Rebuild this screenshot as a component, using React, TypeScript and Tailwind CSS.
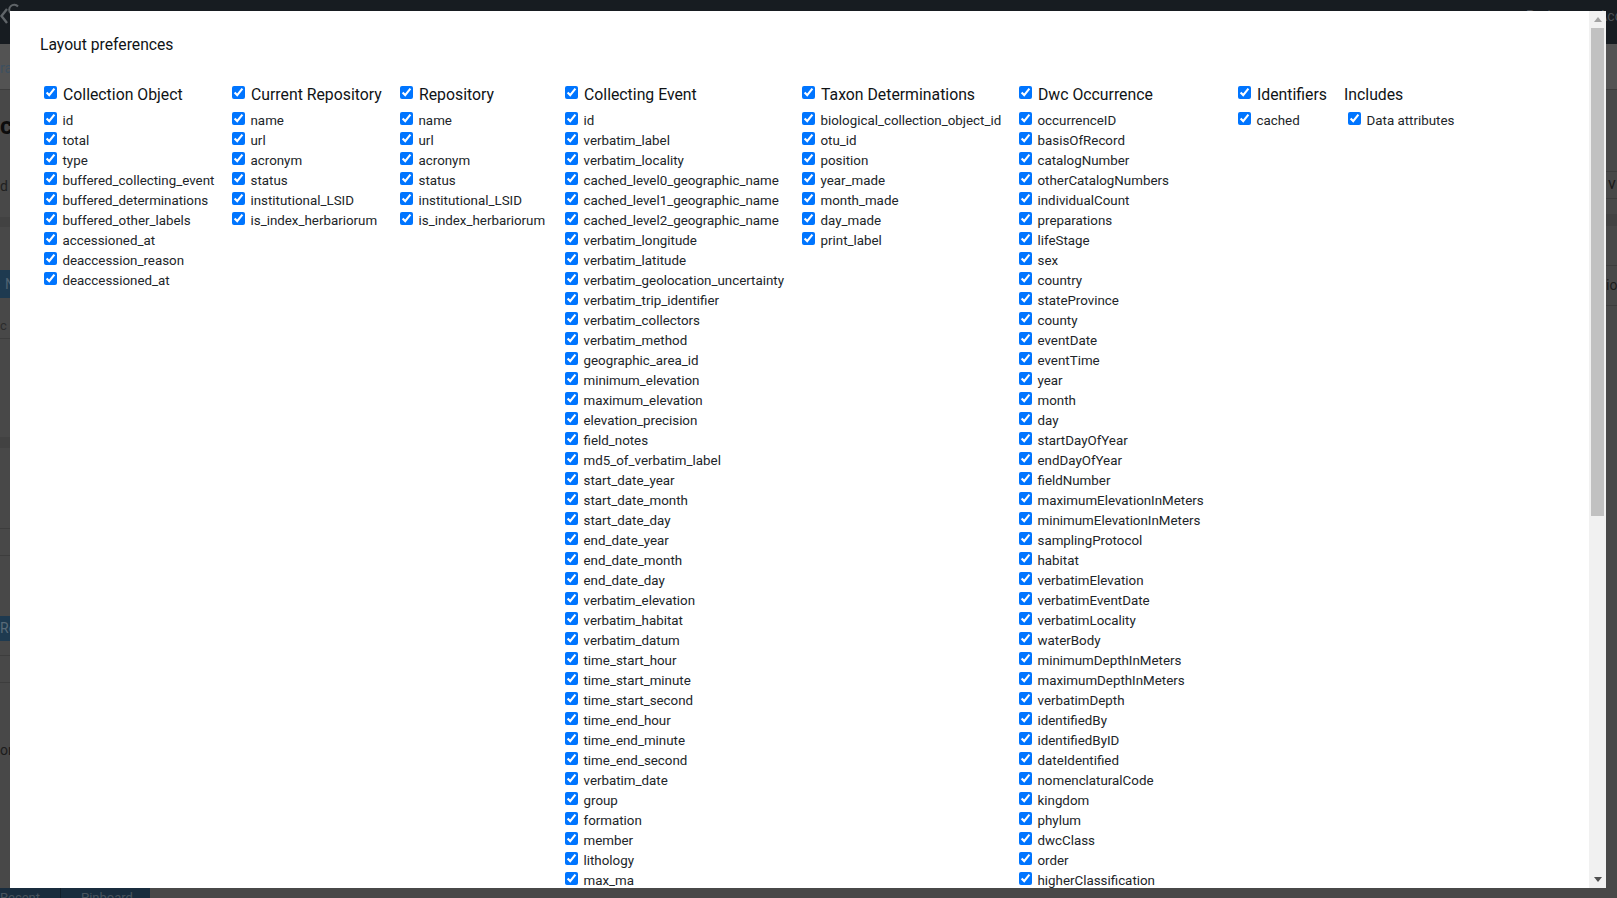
import React from "react";

const columns: { title: string; width: string; check: boolean; items: string[] }[] = [
  { title: "Collection Object", width: "w-[188px]", check: true, items: ["id", "total", "type", "buffered_collecting_event", "buffered_determinations", "buffered_other_labels", "accessioned_at", "deaccession_reason", "deaccessioned_at"] },
  { title: "Current Repository", width: "w-[168px]", check: true, items: ["name", "url", "acronym", "status", "institutional_LSID", "is_index_herbariorum"] },
  { title: "Repository", width: "w-[165px]", check: true, items: ["name", "url", "acronym", "status", "institutional_LSID", "is_index_herbariorum"] },
  { title: "Collecting Event", width: "w-[237px]", check: true, items: ["id", "verbatim_label", "verbatim_locality", "cached_level0_geographic_name", "cached_level1_geographic_name", "cached_level2_geographic_name", "verbatim_longitude", "verbatim_latitude", "verbatim_geolocation_uncertainty", "verbatim_trip_identifier", "verbatim_collectors", "verbatim_method", "geographic_area_id", "minimum_elevation", "maximum_elevation", "elevation_precision", "field_notes", "md5_of_verbatim_label", "start_date_year", "start_date_month", "start_date_day", "end_date_year", "end_date_month", "end_date_day", "verbatim_elevation", "verbatim_habitat", "verbatim_datum", "time_start_hour", "time_start_minute", "time_start_second", "time_end_hour", "time_end_minute", "time_end_second", "verbatim_date", "group", "formation", "member", "lithology", "max_ma"] },
  { title: "Taxon Determinations", width: "w-[217px]", check: true, items: ["biological_collection_object_id", "otu_id", "position", "year_made", "month_made", "day_made", "print_label"] },
  { title: "Dwc Occurrence", width: "w-[219px]", check: true, items: ["occurrenceID", "basisOfRecord", "catalogNumber", "otherCatalogNumbers", "individualCount", "preparations", "lifeStage", "sex", "country", "stateProvince", "county", "eventDate", "eventTime", "year", "month", "day", "startDayOfYear", "endDayOfYear", "fieldNumber", "maximumElevationInMeters", "minimumElevationInMeters", "samplingProtocol", "habitat", "verbatimElevation", "verbatimEventDate", "verbatimLocality", "waterBody", "minimumDepthInMeters", "maximumDepthInMeters", "verbatimDepth", "identifiedBy", "identifiedByID", "dateIdentified", "nomenclaturalCode", "kingdom", "phylum", "dwcClass", "order", "higherClassification"] },
  { title: "Identifiers", width: "w-[110px]", check: true, items: ["cached"] },
  { title: "Includes", width: "w-[130px]", check: false, items: ["Data attributes"] },
];

function Column({ title, width, check, items }: (typeof columns)[number]) {
  return (
    <div className={`${width} shrink-0 pl-1`}>
      <label className={`flex items-center gap-[6px] h-[28px] text-[15.8px] text-[#101316] whitespace-nowrap ${check ? "" : "-ml-1"}`}>
        {check && <input type="checkbox" defaultChecked className="w-[13px] h-[13px] shrink-0 relative -top-[2.5px]" />}
        {title}
      </label>
      <ul className="mt-[2px] flex flex-col">
        {items.map((item) => (
          <li key={item} className="flex items-center gap-[5.5px] h-5 text-[13.35px] text-[#212529] whitespace-nowrap">
            <input type="checkbox" defaultChecked className="w-[13px] h-[13px] shrink-0 relative -top-[2.5px]" />
            <span>{item}</span>
          </li>
        ))}
      </ul>
    </div>
  );
}

function LeftStrip() {
  return (
    <aside className="w-[10px] shrink-0 overflow-hidden whitespace-nowrap">
      <div className="h-[46px] bg-[#535353] border-b border-[#3d3d3d] text-[14px] leading-5 pt-[14px] text-[#3d5060]">ra</div>
      <div className="h-[127px]">
        <div className="pt-[24px] text-2xl leading-6 font-bold text-[#0c0c0c]">c</div>
        <div className="mt-[38px] text-sm leading-5 text-[#202020]">d</div>
      </div>
      <div className="h-[10px] bg-[#424242]" />
      <div className="h-[43px]" />
      <div className="h-[28px] bg-[#1e3a50] pl-[5px] text-sm leading-[28px] text-[#4f6272]">N</div>
      <div className="h-[41px] border-b border-[#3d3d3d] pt-[18px] text-[13px] leading-5 text-[#2c2c2c]">c a</div>
      <div className="h-[98px]" />
      <div className="h-[11px] bg-[#424242]" />
      <div className="h-[81px] border-b border-[#3d3d3d]" />
      <div className="h-[27px] border-b border-[#3d3d3d]" />
      <div className="h-[60px]" />
      <div className="h-[25px] bg-[#1e3a50] text-sm leading-[25px] text-[#596a78]">Re</div>
      <div className="h-[15px] border-b border-[#3d3d3d]" />
      <div className="h-[27px] border-b border-[#3d3d3d]" />
      <div className="pt-[57px] text-sm leading-5 text-[#1c1c1c]">or</div>
    </aside>
  );
}

function RightStrip() {
  return (
    <aside className="w-[11px] shrink-0 overflow-hidden whitespace-nowrap">
      <div className="h-[46px] bg-[#535353] border-b border-[#3d3d3d]" />
      <div className="h-[82px] border-b border-[#3d3d3d]" />
      <div className="h-[27px] border-b border-[#3d3d3d] pl-[2px] pt-[2px] text-base leading-5 text-[#1a1a1a]">v</div>
      <div className="h-[15px]" />
      <div className="h-[12px] bg-[#424242]" />
      <div className="h-[40px] border-b border-[#3d3d3d]" />
      <div className="h-[40px] border-b border-[#3d3d3d] pt-[9px] text-sm leading-5 text-[#1c1c1c]">ion</div>
    </aside>
  );
}

export default function App() {
  return (
    <div className="relative flex flex-col h-[898px] w-full overflow-hidden bg-[#484848] font-['Roboto',sans-serif]">
      <header className="h-[44px] shrink-0 bg-[#171c21] flex items-start justify-between overflow-hidden">
        <svg width="24" height="26" viewBox="0 0 24 26" className="shrink-0">
          <path d="M7 9 1.5 16 7 23" fill="none" stroke="#5f6468" strokeWidth="2.4" />
          <path d="M18 6.5A5 5 0 1 0 18 13" fill="none" stroke="#5f6468" strokeWidth="2" />
        </svg>
        <div className="flex gap-[28px] pt-[6px] -mr-[33px] text-sm leading-5 text-[#4c5055] whitespace-nowrap">
          <span>Project</span>
          <span>Account</span>
        </div>
      </header>
      <div className="flex flex-1 min-h-0">
        <LeftStrip />
        <div className="flex-1" />
        <RightStrip />
      </div>
      <nav className="w-[150px] h-[10px] shrink-0 bg-[#192c3d] flex overflow-hidden text-[13px] leading-5 text-[#47535d]">
        <span className="w-[61px] shrink-0 border-r border-[#111f2b]">Recent</span>
        <span className="pl-[20px]">Pinboard</span>
      </nav>

      <div className="absolute left-[10px] top-[11px] w-[1596px] h-[877px] bg-white overflow-hidden flex">
        <div className="flex-1 min-w-0 pl-[30px] overflow-hidden">
          <h2 className="mt-[24px] h-5 leading-5 text-[15.7px] text-[#101316]">Layout preferences</h2>
          <div className="flex mt-[26px]">
            {columns.map((c) => (
              <Column key={c.title} {...c} />
            ))}
          </div>
        </div>
        <div className="w-[17px] shrink-0 bg-[#f1f1f1] flex flex-col items-center">
          <div className="h-[17px] flex items-center justify-center">
            <svg width="8" height="5" viewBox="0 0 8 5"><path d="M4 0 8 5H0Z" fill="#a3a3a3" /></svg>
          </div>
          <div className="w-[13px] h-[488px] bg-[#c1c1c1]" />
          <div className="flex-1" />
          <div className="h-[17px] flex items-center justify-center">
            <svg width="8" height="5" viewBox="0 0 8 5"><path d="M0 0H8L4 5Z" fill="#505050" /></svg>
          </div>
        </div>
      </div>
    </div>
  );
}
